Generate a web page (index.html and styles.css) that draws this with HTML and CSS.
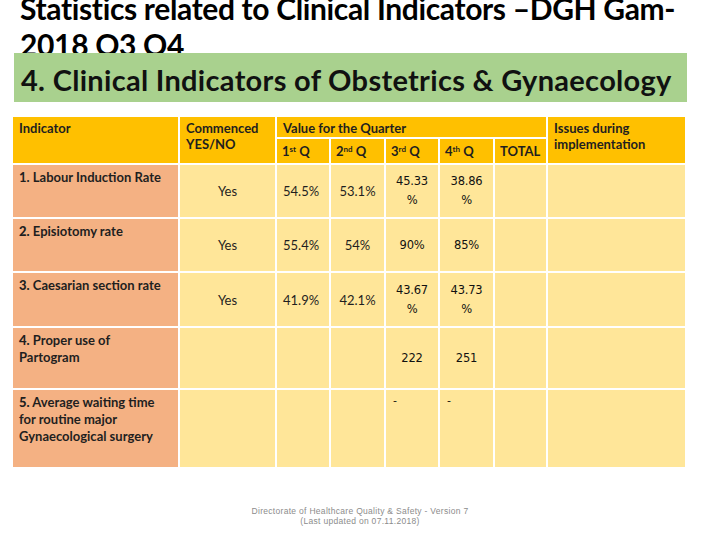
FILE: index.html
```html
<!DOCTYPE html>
<html>
<head>
<meta charset="utf-8">
<link rel="stylesheet" href="styles.css">
</head>
<body>
<div class="slide">
  <div class="title">Statistics related to Clinical Indicators –DGH Gam-<br>2018 Q3 Q4</div>
  <div class="banner">4. Clinical Indicators of Obstetrics &amp; Gynaecology</div>
  <table class="grid">
    <colgroup>
      <col class="c-ind"><col class="c-com"><col class="c-q1"><col class="c-q2"><col class="c-q3"><col class="c-q4"><col class="c-tot"><col class="c-iss">
    </colgroup>
    <tr class="h1">
      <th rowspan="2" class="hd">Indicator</th>
      <th rowspan="2" class="hd">Commenced<br>YES/NO</th>
      <th colspan="5" class="hd">Value for the Quarter</th>
      <th rowspan="2" class="hd">Issues during implementation</th>
    </tr>
    <tr class="h2">
      <th class="hq">1<sup>st</sup> Q</th>
      <th class="hq">2<sup>nd</sup> Q</th>
      <th class="hq">3<sup>rd</sup> Q</th>
      <th class="hq">4<sup>th</sup> Q</th>
      <th class="hq">TOTAL</th>
    </tr>
    <tr class="r1">
      <td class="lab">1. Labour Induction Rate</td>
      <td class="val">Yes</td>
      <td class="val q1">54.5%</td>
      <td class="val">53.1%</td>
      <td class="num">45.33 %</td>
      <td class="num">38.86 %</td>
      <td class="val"></td>
      <td class="val"></td>
    </tr>
    <tr class="r2">
      <td class="lab"><b>2.</b> Episiotomy rate</td>
      <td class="val">Yes</td>
      <td class="val q1">55.4%</td>
      <td class="val">54%</td>
      <td class="num">90%</td>
      <td class="num">85%</td>
      <td class="val"></td>
      <td class="val"></td>
    </tr>
    <tr class="r3">
      <td class="lab"><b>3.</b> Caesarian section rate</td>
      <td class="val">Yes</td>
      <td class="val q1">41.9%</td>
      <td class="val">42.1%</td>
      <td class="num">43.67 %</td>
      <td class="num">43.73 %</td>
      <td class="val"></td>
      <td class="val"></td>
    </tr>
    <tr class="r4">
      <td class="lab"><b>4.</b> Proper use of Partogram</td>
      <td class="val"></td>
      <td class="val"></td>
      <td class="val"></td>
      <td class="num">222</td>
      <td class="num">251</td>
      <td class="val"></td>
      <td class="val"></td>
    </tr>
    <tr class="r5">
      <td class="lab"><b>5.</b> Average waiting time for routine major Gynaecological surgery</td>
      <td class="val"></td>
      <td class="val"></td>
      <td class="val"></td>
      <td class="dash">-</td>
      <td class="dash">-</td>
      <td class="val"></td>
      <td class="val"></td>
    </tr>
  </table>
  <div class="footer">Directorate of Healthcare Quality &amp; Safety - Version 7<br>(Last updated on 07.11.2018)</div>
</div>
</body>
</html>
```

FILE: styles.css
```css
html, body {
  margin: 0;
  padding: 0;
  background: #ffffff;
}
.slide {
  width: 720px;
  height: 540px;
  overflow: hidden;
  font-family: Lato, "Open Sans", sans-serif;
  color: #1a1a1a;
}
.title {
  height: 53px;
  overflow: hidden;
  padding-left: 20px;
  font-size: 30px;
  font-weight: 700;
  line-height: 36px;
  color: #000;
  white-space: nowrap;
  letter-spacing: -0.35px;
}
.title::before {
  content: "";
  display: block;
  margin-top: -10px;
}
.banner {
  margin-left: 14px;
  width: 673px;
  height: 49px;
  box-sizing: border-box;
  background: #a9d18e;
  padding-left: 7px;
  font-size: 29px;
  font-weight: 700;
  line-height: 54px;
  letter-spacing: 0.3px;
  color: #111;
  white-space: nowrap;
  overflow: hidden;
}
.grid {
  margin-top: 13px;
  margin-left: 11px;
  border-collapse: separate;
  border-spacing: 2px;
  table-layout: fixed;
  width: 674px;
  font-size: 13px;
}
.c-ind { width: 165px; }
.c-com { width: 95px; }
.c-q1 { width: 52px; }
.c-q2 { width: 53px; }
.c-q3 { width: 52px; }
.c-q4 { width: 53px; }
.c-tot { width: 51px; }
.c-iss { width: 137px; }
.grid th, .grid td {
  padding: 0;
}
.hd {
  background: #ffc000;
  text-align: left;
  vertical-align: top;
  font-weight: 700;
  padding: 3px 6px 0 6px !important;
  line-height: 16px;
  color: #1f1f1f;
}
.h1 { height: 20px; }
.h2 { height: 24px; }
.hq {
  background: #ffc000;
  text-align: left;
  vertical-align: middle;
  font-weight: 700;
  padding: 0 5px !important;
  color: #1f1f1f;
}
.hq sup {
  font-size: 8px;
  vertical-align: 4px;
  line-height: 0;
}
.r1 { height: 52px; }
.r2 { height: 52px; }
.r3 { height: 53px; }
.r4 { height: 60px; }
.r5 { height: 77px; }
.lab {
  background: #f4b183;
  vertical-align: top;
  padding: 4px 6px 0 6px !important;
  font-weight: 700;
  line-height: 17px;
  color: #1f1f1f;
}
.lab b {
  font-weight: 900;
}
.val {
  background: #ffe699;
  text-align: center;
  vertical-align: middle;
  color: #1f1f1f;
}
.val.q1 {
  text-align: left;
  padding-left: 6px !important;
}
.num {
  background: #ffe699;
  text-align: center;
  vertical-align: middle;
  font-family: "DejaVu Sans", sans-serif;
  font-size: 11.5px;
  line-height: 19px;
  padding: 0 6px !important;
  color: #111;
  letter-spacing: -0.2px;
}
.dash {
  background: #ffe699;
  text-align: left;
  vertical-align: top;
  font-family: "DejaVu Sans", sans-serif;
  font-size: 11px;
  padding: 4px 7px 0 7px !important;
  color: #111;
}
.footer {
  margin-top: 37px;
  text-align: center;
  font-family: "Liberation Sans", Arial, sans-serif;
  font-size: 8.5px;
  line-height: 10px;
  color: #8c8c8c;
  letter-spacing: 0.3px;
}
```
